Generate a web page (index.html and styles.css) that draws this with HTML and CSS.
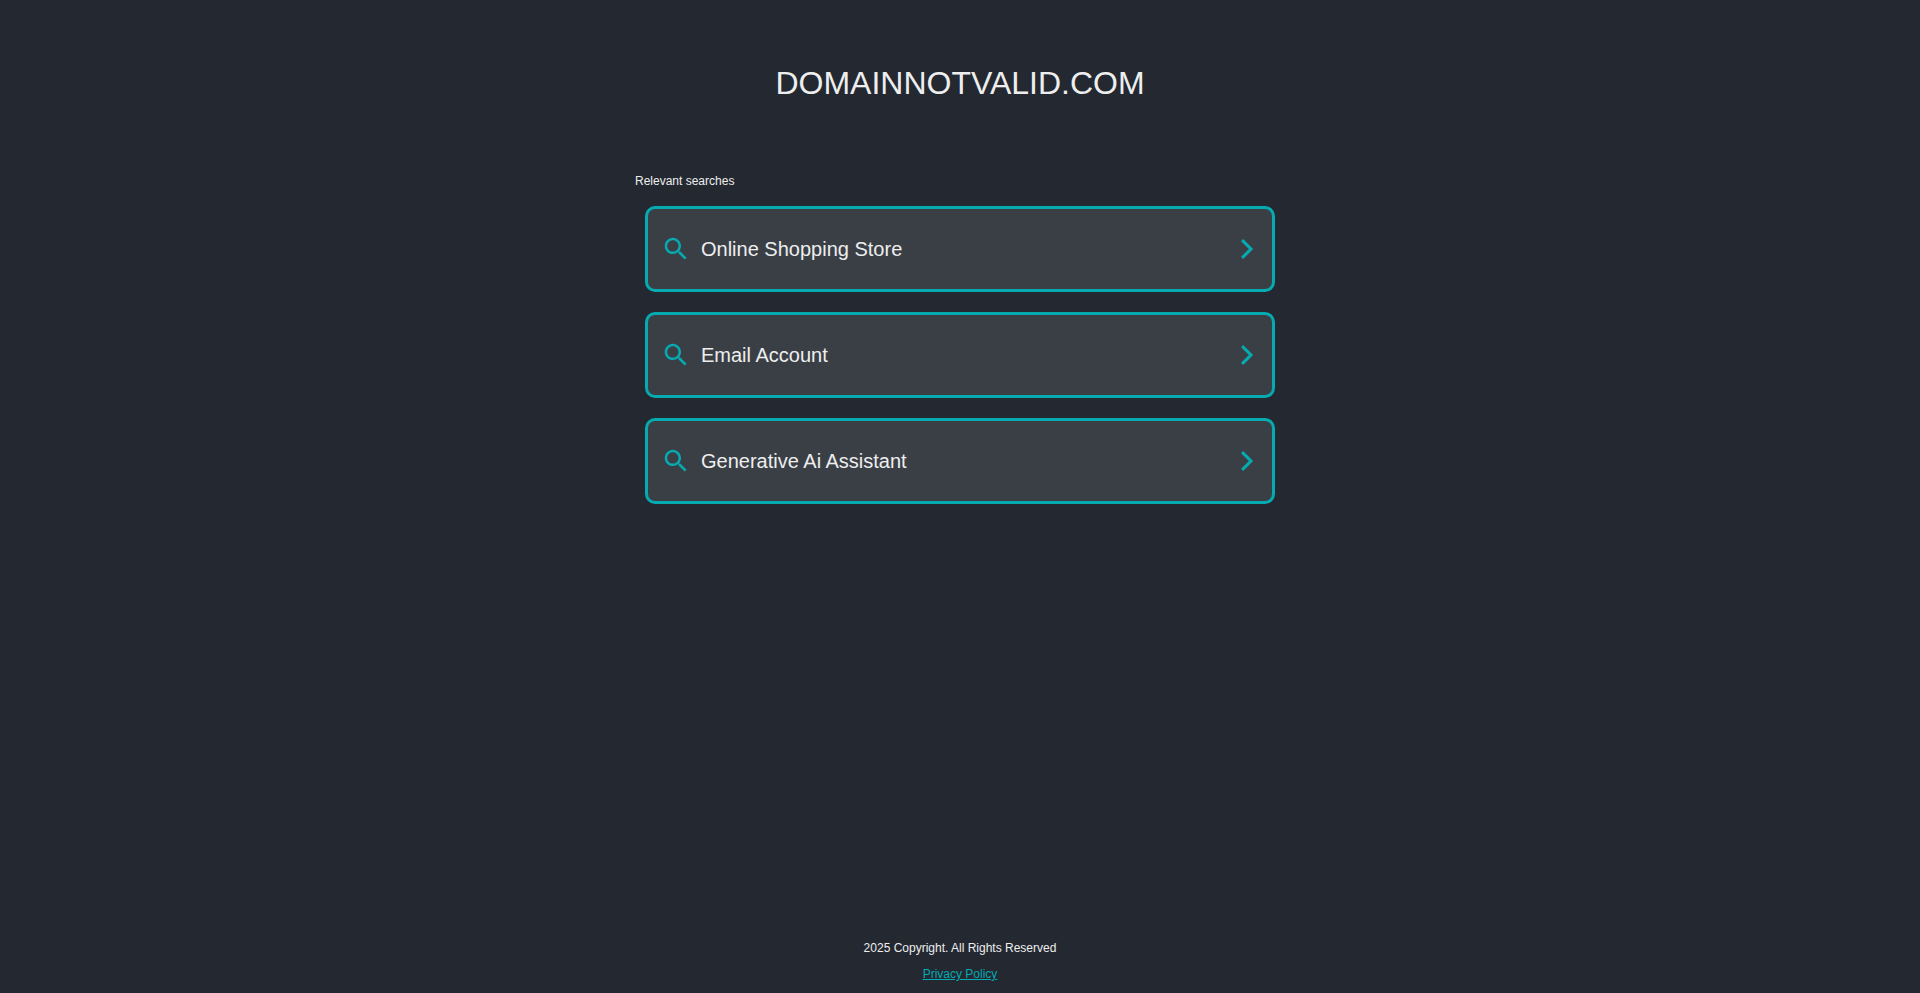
FILE: index.html
```html
<!doctype html>
<html lang="en">
<head>
  <meta charset="utf-8">
  <meta name="viewport" content="width=device-width, initial-scale=1">
  <title>domainnotvalid.com</title>
  <link rel="stylesheet" href="styles.css">
</head>

<body>
  <header>
    <h1 class="domain">domainnotvalid.com</h1>
  </header>

  <main class="container">
    <h2 class="label">Relevant searches</h2>
    <div class="searches">
      <a class="search" href="#">
        <svg class="glass" viewBox="0 0 24 24" aria-hidden="true"><path d="M15.5 14h-.79l-.28-.27C15.41 12.59 16 11.11 16 9.5 16 5.91 13.09 3 9.5 3S3 5.91 3 9.5 5.91 16 9.5 16c1.61 0 3.09-.59 4.23-1.57l.27.28v.79l5 4.99L20.49 19l-4.99-5zm-6 0C7.01 14 5 11.99 5 9.5S7.01 5 9.5 5 14 7.01 14 9.5 11.99 14 9.5 14z"/></svg>
        <span class="term">Online Shopping Store</span>
        <svg class="arrow" viewBox="0 0 24 24" aria-hidden="true"><path d="M7.1 3.1L16 12l-8.9 8.9"/></svg>
      </a>
      <a class="search" href="#">
        <svg class="glass" viewBox="0 0 24 24" aria-hidden="true"><path d="M15.5 14h-.79l-.28-.27C15.41 12.59 16 11.11 16 9.5 16 5.91 13.09 3 9.5 3S3 5.91 3 9.5 5.91 16 9.5 16c1.61 0 3.09-.59 4.23-1.57l.27.28v.79l5 4.99L20.49 19l-4.99-5zm-6 0C7.01 14 5 11.99 5 9.5S7.01 5 9.5 5 14 7.01 14 9.5 11.99 14 9.5 14z"/></svg>
        <span class="term">Email Account</span>
        <svg class="arrow" viewBox="0 0 24 24" aria-hidden="true"><path d="M7.1 3.1L16 12l-8.9 8.9"/></svg>
      </a>
      <a class="search" href="#">
        <svg class="glass" viewBox="0 0 24 24" aria-hidden="true"><path d="M15.5 14h-.79l-.28-.27C15.41 12.59 16 11.11 16 9.5 16 5.91 13.09 3 9.5 3S3 5.91 3 9.5 5.91 16 9.5 16c1.61 0 3.09-.59 4.23-1.57l.27.28v.79l5 4.99L20.49 19l-4.99-5zm-6 0C7.01 14 5 11.99 5 9.5S7.01 5 9.5 5 14 7.01 14 9.5 11.99 14 9.5 14z"/></svg>
        <span class="term">Generative Ai Assistant</span>
        <svg class="arrow" viewBox="0 0 24 24" aria-hidden="true"><path d="M7.1 3.1L16 12l-8.9 8.9"/></svg>
      </a>
    </div>
  </main>

  <footer>
    <p>2025 Copyright. All Rights Reserved</p>
    <p><a class="privacy" href="#">Privacy Policy</a></p>
  </footer>
</body>

</html>
```

FILE: styles.css
```css
* {
  box-sizing: border-box;
}
body {
  margin: 0;
  min-height: 100vh;
  display: flex;
  flex-direction: column;
  background: #232831;
  color: #eeeeee;
  font-family: Arial, "Liberation Sans", sans-serif;
}
.domain {
  margin: 0;
  padding: 64px 20px;
  font-size: 32px;
  font-weight: normal;
  line-height: 38px;
  text-align: center;
  text-transform: uppercase;
}
.container {
  width: 100%;
  max-width: 650px;
  margin: 0 auto;
}
.label {
  margin: 0;
  padding: 8px 0;
  font-size: 12px;
  font-weight: normal;
  line-height: 14px;
}
.searches {
  display: flex;
  flex-direction: column;
  gap: 20px;
  padding: 10px;
}
.search {
  display: flex;
  align-items: center;
  gap: 10px;
  min-height: 86px;
  padding: 10px 13px;
  border: 3px solid #05abb1;
  border-radius: 10px;
  background: #3a3f46;
  color: #eeeeee;
  font-size: 20px;
  line-height: 24px;
  text-decoration: none;
}
.search:hover {
  background: #454b54;
}
.glass {
  width: 30px;
  height: 30px;
  fill: #05abb1;
}
.arrow {
  width: 24px;
  height: 24px;
  fill: none;
  stroke: #05abb1;
  stroke-width: 3;
}
.term {
  flex: 1;
}
footer {
  margin-top: auto;
  padding-bottom: 12px;
  font-size: 12px;
  line-height: 14px;
  text-align: center;
}
footer p {
  margin: 12px 0 0;
}
.privacy {
  color: #05abb1;
}
```
